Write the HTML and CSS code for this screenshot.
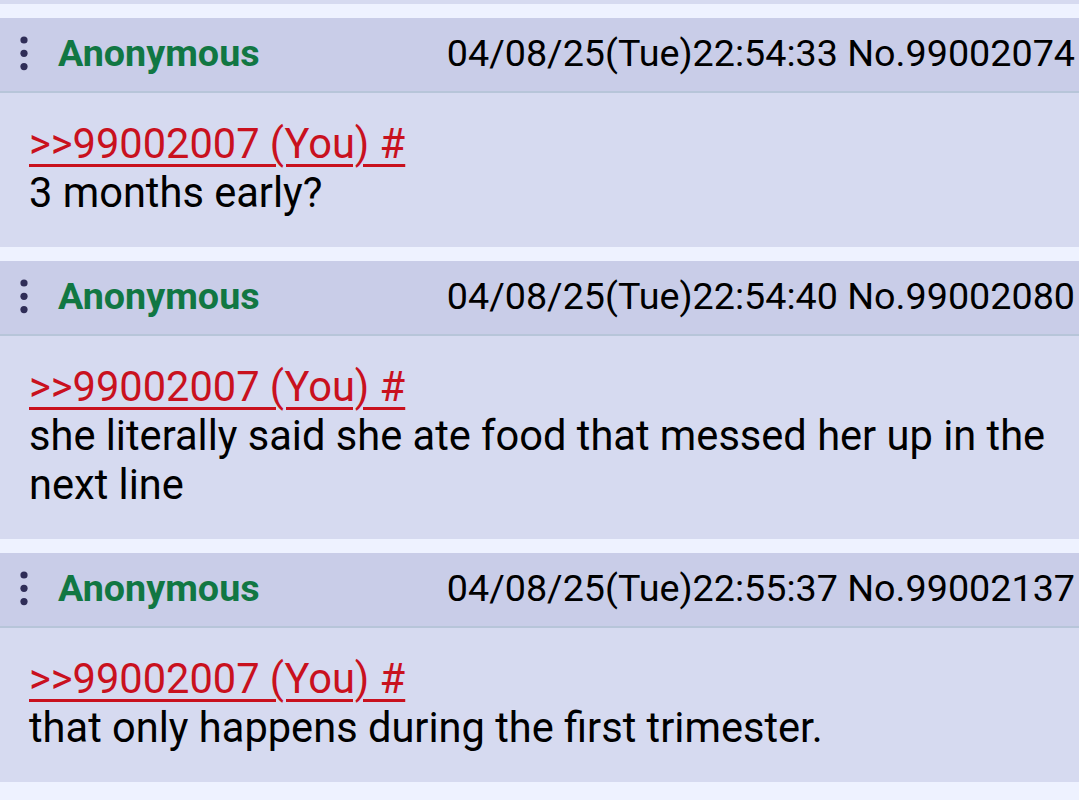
FILE: index.html
```html
<!DOCTYPE html>
<html>
<head>
<meta charset="utf-8">
<link rel="stylesheet" href="styles.css">
</head>
<body>
<div class="thread">
  <div class="prev-tail"></div>

  <div class="post">
    <div class="post-head">
      <div class="head-left">
        <svg class="menu" width="10" height="36" viewBox="0 0 10 36"><circle cx="5" cy="5" r="3.6"/><circle cx="5" cy="18.3" r="3.6"/><circle cx="5" cy="31.6" r="3.6"/></svg>
        <span class="name">Anonymous</span>
      </div>
      <span class="meta">04/08/25(Tue)22:54:33 No.99002074</span>
    </div>
    <div class="post-body">
      <a class="quote">&gt;&gt;99002007 (You) #</a><br>3 months early?
    </div>
  </div>

  <div class="post">
    <div class="post-head">
      <div class="head-left">
        <svg class="menu" width="10" height="36" viewBox="0 0 10 36"><circle cx="5" cy="5" r="3.6"/><circle cx="5" cy="18.3" r="3.6"/><circle cx="5" cy="31.6" r="3.6"/></svg>
        <span class="name">Anonymous</span>
      </div>
      <span class="meta">04/08/25(Tue)22:54:40 No.99002080</span>
    </div>
    <div class="post-body">
      <a class="quote">&gt;&gt;99002007 (You) #</a><br>she literally said she ate food that messed her up in the next line
    </div>
  </div>

  <div class="post">
    <div class="post-head">
      <div class="head-left">
        <svg class="menu" width="10" height="36" viewBox="0 0 10 36"><circle cx="5" cy="5" r="3.6"/><circle cx="5" cy="18.3" r="3.6"/><circle cx="5" cy="31.6" r="3.6"/></svg>
        <span class="name">Anonymous</span>
      </div>
      <span class="meta">04/08/25(Tue)22:55:37 No.99002137</span>
    </div>
    <div class="post-body">
      <a class="quote">&gt;&gt;99002007 (You) #</a><br>that only happens during the first trimester.
    </div>
  </div>
</div>
</body>
</html>
```

FILE: styles.css
```css
html, body {
  margin: 0;
  padding: 0;
  background: #eef2ff;
}
body {
  font-family: Roboto, "Noto Sans", sans-serif;
  width: 1079px;
  height: 800px;
  overflow: hidden;
}
.thread {
  display: flex;
  flex-direction: column;
  gap: 14px;
}
.prev-tail {
  height: 4px;
  background: #d6daf0;
}
.post {
  display: flex;
  flex-direction: column;
}
.post-head {
  height: 73px;
  box-sizing: border-box;
  height: 75px;
  background: #c9cde8;
  border-bottom: 2px solid #b7c5d9;
  display: flex;
  align-items: center;
  justify-content: space-between;
  padding: 0 4px 3px 19px;
  font-size: 37.7px;
  white-space: nowrap;
}
.head-left {
  display: flex;
  align-items: center;
  gap: 29px;
}
.menu {
  fill: #2f2d57;
  display: block;
}
.name {
  color: #117743;
  font-weight: 700;
}
.meta {
  color: #000;
}
.post-body {
  background: #d6daf0;
  color: #000;
  font-size: 41.6px;
  line-height: 49px;
  padding: 26px 20px 30px 29px;
}
.quote {
  color: #c9111e;
  text-decoration: underline;
  text-decoration-thickness: 3px;
  text-underline-offset: 6px;
}
```
